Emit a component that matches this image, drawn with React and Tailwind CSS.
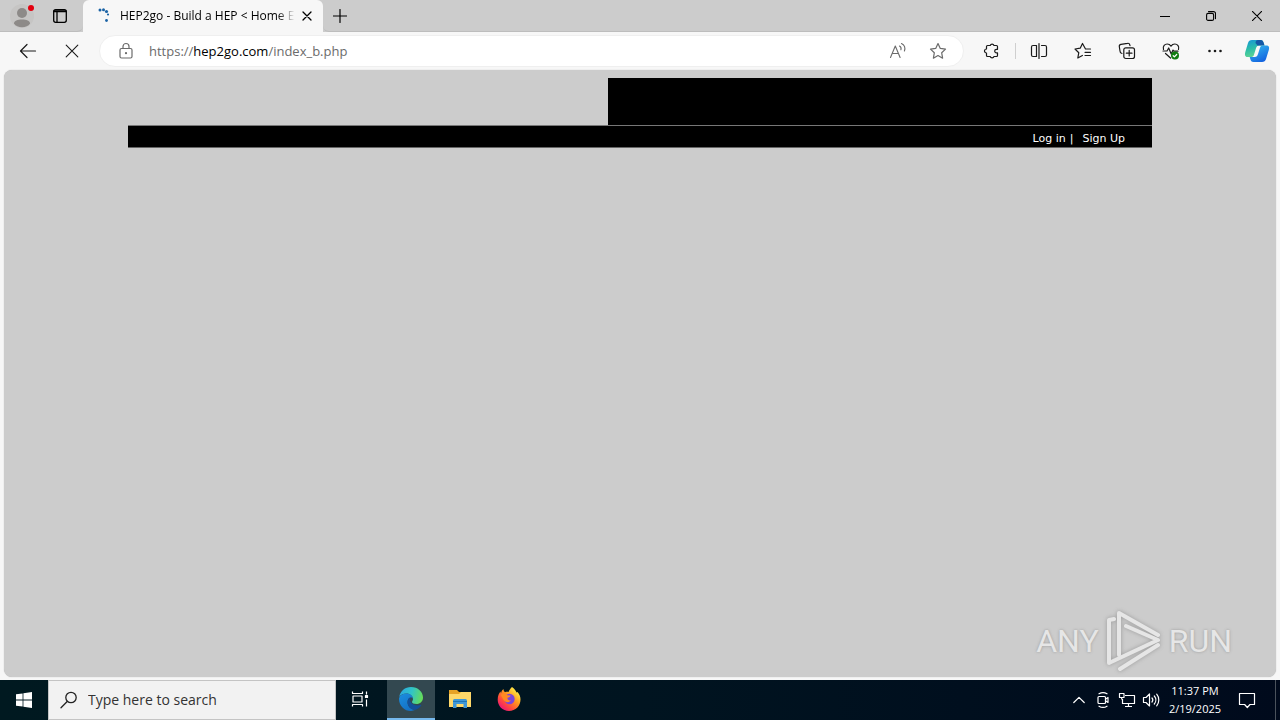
import React from "react";

function Icon({ size = 18, box = 18, stroke = 1.2, className = "", children }) {
  return (
    <svg
      width={size}
      height={size}
      viewBox={`0 0 ${box} ${box}`}
      fill="none"
      stroke="currentColor"
      strokeWidth={stroke}
      strokeLinecap="round"
      strokeLinejoin="round"
      className={`shrink-0 ${className}`}
      aria-hidden="true"
    >
      {children}
    </svg>
  );
}

function IconButton({ label, className = "w-11", children }) {
  return (
    <button type="button" aria-label={label} className={`flex h-8 shrink-0 items-center justify-center ${className}`}>
      {children}
    </button>
  );
}

function TabStrip() {
  return (
    <header className="flex h-8 items-stretch bg-[#cccccc] text-black">
      <div className="flex w-[83px] shrink-0 items-center rounded-br-md border-b border-[#bdbdbd] pl-1">
        <IconButton label="Profile" className="w-9">
          <svg width="26" height="26" viewBox="0 0 26 26" aria-hidden="true">
            <circle cx="13" cy="13" r="12" fill="#c6c5c4" />
            <circle cx="13" cy="10" r="5" fill="#8d8a88" />
            <path d="M5 20.5c0-2.600 3.500-4 8-4s8 1.400 8 4c-1.500 2.500-4.500 3.700-8 3.700s-6.500-1.200-8-3.700Z" fill="#8d8a88" />
            <circle cx="22" cy="5" r="3" fill="#e3000f" />
          </svg>
        </IconButton>
        <IconButton label="Tab actions" className="w-10">
          <Icon size={16} box={16} stroke={1.300}>
            <rect x="1.700" y="1.700" width="12.600" height="12.600" rx="2" />
            <path d="M2.200 3.200h11.600" strokeWidth="2" />
            <path d="M5 4v10" />
          </Icon>
        </IconButton>
      </div>
      <div className="flex w-60 shrink-0 items-center rounded-t-md bg-[#f7f7f7] pl-3 pr-1">
        <svg width="18" height="18" viewBox="0 0 18 18" className="shrink-0" fill="#1b63a5" aria-hidden="true">
          <circle cx="5" cy="3" r="1.500" />
          <circle cx="8.500" cy="2.700" r="1.500" />
          <circle cx="11.500" cy="4.500" r="1.600" />
          <circle cx="13" cy="7.500" r="1.100" />
          <circle cx="11.500" cy="13.500" r="1.400" />
        </svg>
        <span className="ml-[7px] flex-1 overflow-hidden whitespace-nowrap text-xs [mask-image:linear-gradient(to_right,black_90%,transparent)]">
          HEP2go - Build a HEP &lt; Home Ex
        </span>
        <IconButton label="Close tab" className="w-6">
          <Icon size={10} box={10} stroke={1.300}>
            <path d="M1 1l8 8M9 1l-8 8" />
          </Icon>
        </IconButton>
      </div>
      <div className="flex flex-1 items-center rounded-bl-md border-b border-[#bdbdbd]">
        <IconButton label="New tab" className="w-[34px]">
          <Icon size={14} box={14} stroke={1.200}>
            <path d="M7 .5v13M.5 7h13" />
          </Icon>
        </IconButton>
        <div className="ml-auto flex">
          <IconButton label="Minimize" className="w-[46px]">
            <Icon size={10} box={10} stroke={1}>
              <path d="M0 5.500h10" />
            </Icon>
          </IconButton>
          <IconButton label="Restore" className="w-[46px]">
            <Icon size={10} box={10} stroke={1.100}>
              <rect x=".6" y="2.400" width="7" height="7" rx="1.500" />
              <path d="M2.500 .6h5a2 2 0 0 1 2 2v5" />
            </Icon>
          </IconButton>
          <IconButton label="Close" className="w-[46px]">
            <Icon size={10} box={10} stroke={1.100}>
              <path d="M.3 .3l9.400 9.400M9.700 .3L.3 9.700" />
            </Icon>
          </IconButton>
        </div>
      </div>
    </header>
  );
}

function Toolbar() {
  return (
    <div className="flex h-[38px] items-center bg-[#f7f7f7] pl-[6px] pr-[3px] text-[#1a1a1a]">
      <IconButton label="Back">
        <Icon size={18} box={18} stroke={1.200}>
          <path d="M16.500 9H1.500M8 2.500L1.500 9 8 15.500" />
        </Icon>
      </IconButton>
      <IconButton label="Stop loading">
        <Icon size={14} box={14} stroke={1.100}>
          <path d="M1.200 1.200l11.600 11.600M12.800 1.200L1.200 12.800" />
        </Icon>
      </IconButton>
      <div className="ml-[5px] flex h-8 min-w-0 flex-1 items-center rounded-full border border-[#efefef] bg-white pl-[17px] pr-[5px] text-[#6b6b6b]">
        <Icon size={18} box={18}>
          <rect x="3" y="6.500" width="12" height="9.500" rx="1.500" />
          <path d="M6 6.500V4.500a3 3 0 0 1 6 0v2" />
          <circle cx="9" cy="11.200" r=".5" fill="currentColor" />
        </Icon>
        <a href="https://hep2go.com/index_b.php" className="ml-[14px] flex-1 truncate text-[13px] leading-5">
          https://<span className="text-black">hep2go.com</span>/index_b.php
        </a>
        <IconButton label="Read aloud" className="w-10">
          <Icon size={18} box={18} stroke={1.100}>
            <path d="M1.500 15.500L6.300 4l4.800 11.500M3.200 11.500h6.200M10.500 4c1.400.8 1.900 2.100 1.400 3.800M12.500 1.500c2.800 1.500 4.100 4.200 2.900 7.500" />
          </Icon>
        </IconButton>
        <IconButton label="Add to favorites" className="w-10">
          <Icon>
            <path d="M9 1.500l2.300 4.900 5.200.7-3.800 3.700.9 5.400L9 13.600l-4.600 2.600.9-5.400L1.500 7.100l5.200-.7Z" />
          </Icon>
        </IconButton>
      </div>
      <div className="ml-[6px] flex items-center">
        <IconButton label="Extensions">
          <Icon>
            <path d="M4.500 3.500h2.700a2 2 0 0 1 3.800 0h2.500a1 1 0 0 1 1 1v2.800h-1a1.800 1.800 0 0 0 0 3.600h1v2.600a1 1 0 0 1-1 1H11a2 2 0 0 1-3.800 0H4.500a1 1 0 0 1-1-1V11a2 2 0 0 1 0-4V4.500a1 1 0 0 1 1-1Z" />
          </Icon>
        </IconButton>
        <span className="mx-px h-4 w-px bg-[#cfcfcf]" />
        <IconButton label="Split screen">
          <Icon>
            <path d="M6.500 3.500H3A1.500 1.500 0 0 0 1.500 5v8A1.500 1.500 0 0 0 3 14.500h3.500V3.500ZM9 1.500v15M11.500 3.500H15A1.500 1.500 0 0 1 16.500 5v8a1.500 1.500 0 0 1-1.500 1.500h-3.500" />
          </Icon>
        </IconButton>
        <IconButton label="Favorites">
          <Icon>
            <path d="M16.500 7h-5L8.500 1.500 6.200 6.200 1 7l3.800 3.700-1 5.300 4.600-2.500M11 10.300h5.500M11 13.500h5.500" />
          </Icon>
        </IconButton>
        <IconButton label="Collections">
          <Icon>
            <path d="M4 11.500A2.500 2.500 0 0 1 2 9L1.300 4.500A2 2 0 0 1 3 2.300l6.500-1a2 2 0 0 1 2.300 1.500l.2.800" />
            <rect x="5.800" y="5.800" width="10.700" height="10.700" rx="2" />
            <path d="M11.200 8.300v5.700M8.300 11.200H14" />
          </Icon>
        </IconButton>
        <IconButton label="Browser essentials">
          <Icon>
            <path d="M1.500 7.500C.5 4 3 2 5.200 2 7 2 8.200 3 9 4.200 9.800 3 11 2 12.800 2 15.500 2 17.500 4.500 16.500 7.500M1 9h4l1.700-3 2.500 6 1.800-4 .8 1.200H16M3.500 11.500L8.500 16" />
            <circle cx="13" cy="13.500" r="4" fill="#107c10" stroke="none" />
            <path d="M11.200 13.700l1.200 1.100 2.300-2.300" stroke="white" />
          </Icon>
        </IconButton>
        <IconButton label="Settings and more">
          <Icon stroke={0}>
            <g fill="currentColor">
              <circle cx="3.500" cy="9" r="1.300" />
              <circle cx="9" cy="9" r="1.300" />
              <circle cx="14.500" cy="9" r="1.300" />
            </g>
          </Icon>
        </IconButton>
        <IconButton label="Copilot" className="w-10">
          <svg width="26" height="26" viewBox="0 0 26 26" aria-hidden="true">
            <defs>
              <linearGradient id="copilotLeft" x1="0" y1="0" x2="0.300" y2="1">
                <stop offset="0" stopColor="#1595d8" />
                <stop offset=".55" stopColor="#2bbda8" />
                <stop offset="1" stopColor="#5dd394" />
              </linearGradient>
              <linearGradient id="copilotRight" x1="0" y1="0" x2="0.600" y2="1">
                <stop offset="0" stopColor="#35c0ef" />
                <stop offset="1" stopColor="#1464e0" />
              </linearGradient>
            </defs>
            <path d="M8 2h8.500c2 0 2.600 1.200 3.200 3l.8 2.500h-5.300c-2 0-2.700 1.100-3.300 3l-2 6.500c-.5 1.500-1.300 2-3 2H3.500C.8 19 .7 16.500 1.300 14L4 5c.6-2 1.800-3 4-3Z" fill="url(#copilotLeft)" />
            <path d="M14 2h2.500c2 0 2.600 1.200 3.200 3l.8 2.500h-7L11.500 5c0-1.800 1-3 2.500-3Z" fill="#1458a6" />
            <path d="M18 24H9.500c-2 0-2.700-1.200-3.200-3L5.700 19h5c2 0 2.700-1.200 3.300-3l2-6.200c.5-1.600 1.300-2.300 3-2.300h3.500c2.700 0 3 2.300 2.300 4.500L22 21c-.6 2-1.800 3-4 3Z" fill="url(#copilotRight)" />
          </svg>
        </IconButton>
      </div>
    </div>
  );
}

function Watermark() {
  return (
    <div className="absolute bottom-1 right-11 flex items-center gap-[5px] font-[Roboto,'Liberation_Sans',sans-serif] text-[32px] leading-[64px] text-[#e6e6e6] [text-shadow:0_0_3px_#999999]">
      <span>ANY</span>
      <svg width="60" height="64" viewBox="0 0 60 64" fill="none" stroke="#e6e6e6" strokeWidth="4" strokeLinecap="round" strokeLinejoin="round" className="drop-shadow-[0_0_2px_#999999]" aria-hidden="true">
        <path d="M15 46V4l39 22" />
        <path d="M10 10L5 11v43L54 31 22 17" />
        <path d="M16 60l38-24" />
      </svg>
      <span>RUN</span>
    </div>
  );
}

function PageView() {
  return (
    <main className="relative mx-1 mb-[3px] flex-1 rounded-lg bg-[#cccccc] pt-2 font-['DejaVu_Sans',Verdana,sans-serif] shadow-[0_0_1px_#aaaaaa]">
      <div className="mx-auto w-full max-w-5xl">
        <div className="ml-auto h-[47px] w-[544px] bg-black" />
        <nav className="flex h-[23px] items-center justify-end border-y border-t-[#777777] border-b-[#666666] bg-black pr-[27px] pt-1 text-[11px] leading-4 text-white">
          <a href="#login">Log in</a>
          <span className="ml-1 mr-2">|</span>
          <a href="#signup" className="pl-px">Sign Up</a>
        </nav>
      </div>
      <Watermark />
    </main>
  );
}

function TaskButton({ label, active = false, children }) {
  return (
    <button
      type="button"
      aria-label={label}
      className={`flex h-10 w-12 items-center justify-center border-b-2 ${active ? "border-[#76b9ed] bg-[#334850]" : "border-transparent"}`}
    >
      {children}
    </button>
  );
}

function Taskbar() {
  return (
    <footer className="flex h-10 items-center bg-linear-to-r from-[#001920] via-[#001420] to-[#000a1c] text-white">
      <IconButton label="Start" className="w-12">
        <svg width="16" height="16" viewBox="0 0 16 16" fill="white" aria-hidden="true">
          <path d="M0 2.300L6.600 1.400v6.200H0ZM7.400 1.200L16 0v7.600H7.400ZM0 8.400h6.600v6.200L0 13.700ZM7.400 8.400H16V16l-8.600-1.200Z" />
        </svg>
      </IconButton>
      <div className="flex h-10 w-72 items-center border border-[#c4c4c4] bg-[#f2f2f2] pl-[11px] text-[#222222]">
        <label htmlFor="taskbar-search" aria-label="Search">
          <Icon size={18} box={18} stroke={1.300}>
            <circle cx="11" cy="6.500" r="5.200" />
            <path d="M7.200 10.500L1 16.700" />
          </Icon>
        </label>
        <input
          id="taskbar-search"
          type="text"
          placeholder="Type here to search"
          className="ml-[10px] min-w-0 flex-1 bg-transparent text-sm outline-none placeholder:text-[#333333]"
        />
      </div>
      <div className="flex gap-px">
        <TaskButton label="Task view">
          <Icon size={18} box={18} stroke={1.200}>
            <path d="M1.500 1.500v2h10v-2M1.500 16.500v-2h10v2M2 6h9v6H2ZM15.500 1.500v3M15.500 9.500v7" strokeLinecap="butt" />
            <rect x="14.500" y="5.500" width="2" height="2" fill="white" />
          </Icon>
        </TaskButton>
        <span className="w-px" />
        <TaskButton label="Microsoft Edge" active>
          <svg width="24" height="24" viewBox="0 0 24 24" aria-hidden="true">
            <defs>
              <linearGradient id="edgeTop" x1="0" y1="0.300" x2="1" y2="0.500">
                <stop offset="0" stopColor="#2aa7e0" />
                <stop offset=".5" stopColor="#31c4c7" />
                <stop offset="1" stopColor="#66dc58" />
              </linearGradient>
              <linearGradient id="edgeBody" x1="0" y1="0" x2="0.600" y2="1">
                <stop offset="0" stopColor="#1b8ee0" />
                <stop offset="1" stopColor="#1470c4" />
              </linearGradient>
            </defs>
            <path d="M.3 10C1.200 4 6 0 12 0c7 0 12 5 12 10.500 0 4-3 6.500-6.500 6.500-3 0-4.500-1-4.500-2 0-.8 1-1.200 1-3C14 9 11 6.500 7.500 6.500 4 6.500 1.500 8 .3 10Z" fill="url(#edgeTop)" />
            <path d="M.1 11C1 8 4 6.500 7.500 6.500c3.800 0 6.500 2.500 6.500 5.300-.3-.8-1-1.300-2-1.300-2 0-3.500 2-3.500 4.500 0 5 4 8 8 7.800C15 23.500 13.500 24 12 24 5 24-.6 18 .1 11Z" fill="url(#edgeBody)" />
            <path d="M12 10.500c-2 0-3.500 2-3.500 4.500 0 5 4 8 8 7.800 2.500-.8 4.500-2.400 5.800-4.500.3-.6-.1-.8-.6-.6-1 .5-2.200.7-3.300.7-4.700 0-7.400-3.200-7.400-5.600 0-1 .4-1.800 1-2.300Z" fill="#124f9a" />
          </svg>
        </TaskButton>
        <TaskButton label="File Explorer">
          <svg width="22" height="20" viewBox="0 0 22 20" aria-hidden="true">
            <path d="M0 1h8l2 2h12v15H0Z" fill="#e7a325" />
            <path d="M0 5h10l2-2h10v15H0Z" fill="#ffd869" />
            <path d="M4 19v-7.500A1.500 1.500 0 0 1 5.500 10h11a1.500 1.500 0 0 1 1.500 1.500V19h-3.500v-4h-7v4Z" fill="#3f97d6" />
            <path d="M4 12.500h14" stroke="#1c74b6" />
          </svg>
        </TaskButton>
        <TaskButton label="Firefox">
          <svg width="24" height="24" viewBox="0 0 24 24" aria-hidden="true">
            <defs>
              <linearGradient id="foxBody" x1="0.850" y1="0.100" x2="0.200" y2="0.900">
                <stop offset="0" stopColor="#fff14a" />
                <stop offset=".4" stopColor="#ff9a1f" />
                <stop offset=".75" stopColor="#ff4a3d" />
                <stop offset="1" stopColor="#ed1a72" />
              </linearGradient>
            </defs>
            <path d="M15 0c3 2 3.800 4 4.500 5.500l1-.5c2 2 3 5 3 7.500C23.500 19 18.500 24 12 24S.7 19 .7 12.800C.7 9 2 6 3.500 4.500L4 6.500C4.500 4 5.500 2.800 6.500 2c0 1.500.5 2.500 1.500 3.200 1-.4 2.500-.5 3.500-.2C12.500 3 13.500 1 15 0Z" fill="url(#foxBody)" />
            <circle cx="12.500" cy="12" r="5.200" fill="#7a45dc" />
            <path d="M3.800 8c2.200-1.800 5-1.500 6.500.2l3.200.3c-.4 1.700-2.200 2-3 2.300-.3 2 1.500 3 3.300 2.500-1 2-4 2.700-6 1C6 12.800 5 10 3.800 8Z" fill="#ff8a21" />
          </svg>
        </TaskButton>
      </div>
      <div className="ml-auto flex h-10 items-center">
        <IconButton label="Show hidden icons" className="w-6">
          <Icon size={12} box={12}>
            <path d="M.8 8.500L6 3.300l5.200 5.200" />
          </Icon>
        </IconButton>
        <IconButton label="Meet now" className="w-6">
          <Icon size={18} box={18}>
            <rect x="4" y="5.500" width="7.500" height="7" rx="1" />
            <path d="M11.500 8.200l2.500-1.700v5l-2.500-1.700M5 2.800c2.500-1.600 5.500-1.600 8 0M5 15.200c2.500 1.600 5.500 1.600 8 0" />
          </Icon>
        </IconButton>
        <IconButton label="Network" className="w-6">
          <Icon size={18} box={18}>
            <path d="M7 4.500h9.500v8H4.500V8M10.500 12.500V15M7 15.500h7M1.500 2.500h4.500v4H1.500ZM3.700 6.500v2" strokeLinecap="butt" />
          </Icon>
        </IconButton>
        <IconButton label="Volume" className="w-6">
          <Icon size={18} box={18}>
            <path d="M1.500 6.500h2.500L7.500 3v12L4 11.500H1.500ZM10 7c1 1.200 1 2.800 0 4M12.300 5c2 2.300 2 5.700 0 8M14.700 3.200c2.800 3.300 2.800 8.300 0 11.600" />
          </Icon>
        </IconButton>
        <time dateTime="2025-02-19T23:37" className="flex w-16 flex-col items-center text-[11px] leading-[18px]">
          <span>11:37 PM</span>
          <span>2/19/2025</span>
        </time>
        <IconButton label="Notifications" className="w-10">
          <Icon size={18} box={18}>
            <path d="M1.500 2.500h15v11H12l-2.700 3-2.700-3H1.500Z" />
          </Icon>
        </IconButton>
        <span className="ml-2 mr-1 h-10 w-px bg-[#4a525c]" />
      </div>
    </footer>
  );
}

export default function App() {
  return (
    <div className="flex min-h-screen flex-col bg-[#f7f7f7] font-['Open_Sans','Noto_Sans',sans-serif]">
      <TabStrip />
      <Toolbar />
      <PageView />
      <Taskbar />
    </div>
  );
}
